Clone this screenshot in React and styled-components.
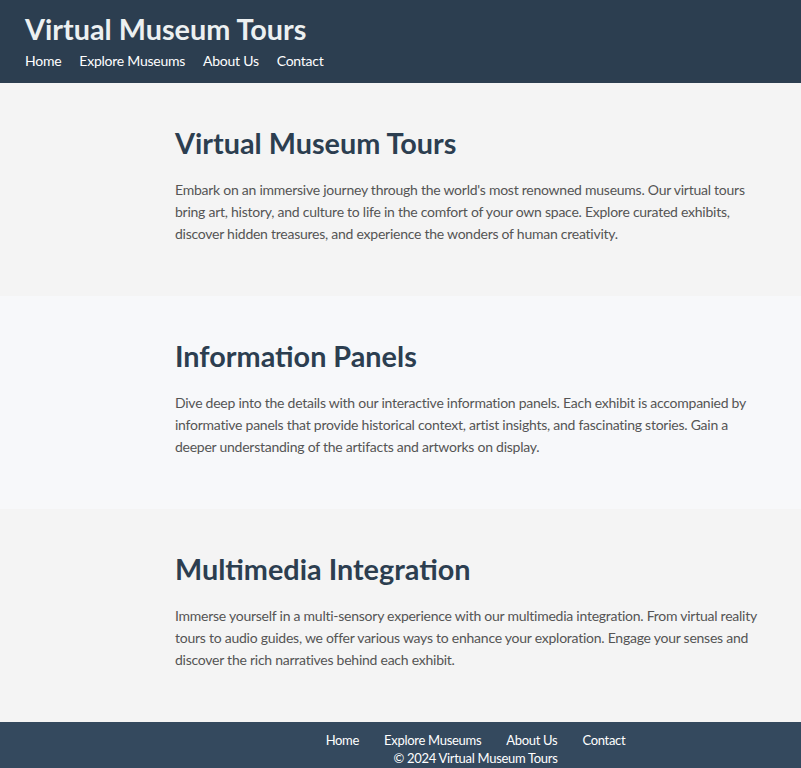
import styled, { createGlobalStyle } from "styled-components";

const GlobalStyle = createGlobalStyle`
  html, body {
    margin: 0;
    padding: 0;
  }
  body {
    font-family: Lato, "Noto Sans", sans-serif;
    background-color: #f4f4f4;
    color: #555;
  }
`;

const Header = styled.header`
  background-color: #2c3e50;
  color: #ecf0f1;
  padding: 12px 25px 12px;
  height: 83px;
  box-sizing: border-box;
`;

const SiteTitle = styled.h1`
  margin: 0;
  font-size: 28.8px;
  line-height: 34px;
  font-weight: 700;
`;

const Nav = styled.nav`
  display: flex;
  gap: 18px;
  margin-top: 6px;
`;

const NavLink = styled.a`
  color: #fff;
  text-decoration: none;
  font-size: 14px;
  line-height: 18px;
  letter-spacing: -0.25px;
`;

const Section = styled.section`
  background-color: ${({ $alt }) => ($alt ? "#f7f8fa" : "#f4f4f4")};
  height: 213px;
  box-sizing: border-box;
  padding: 43px 25px 0 175px;
`;

const Heading = styled.h2`
  margin: 0 0 19px;
  color: #2c3e50;
  font-size: 28.8px;
  line-height: 34px;
  font-weight: 700;
`;

const Text = styled.p`
  margin: 0;
  font-size: 14px;
  line-height: 22px;
  letter-spacing: -0.25px;
  max-width: 585px;
`;

const Footer = styled.footer`
  background-color: #34495e;
  color: #fff;
  padding: 9px 0 10px 150px;
  text-align: center;
`;

const FooterNav = styled.div`
  display: flex;
  justify-content: center;
  gap: 25px;
`;

const FooterLink = styled.a`
  color: #fff;
  text-decoration: none;
  font-size: 13px;
  line-height: 18px;
  letter-spacing: -0.3px;
`;

const Copy = styled.p`
  margin: 0;
  font-size: 13px;
  line-height: 18px;
  letter-spacing: -0.3px;
`;

const links = ["Home", "Explore Museums", "About Us", "Contact"];

const sections = [
  {
    title: "Virtual Museum Tours",
    text: "Embark on an immersive journey through the world's most renowned museums. Our virtual tours bring art, history, and culture to life in the comfort of your own space. Explore curated exhibits, discover hidden treasures, and experience the wonders of human creativity.",
  },
  {
    title: "Information Panels",
    text: "Dive deep into the details with our interactive information panels. Each exhibit is accompanied by informative panels that provide historical context, artist insights, and fascinating stories. Gain a deeper understanding of the artifacts and artworks on display.",
    alt: true,
  },
  {
    title: "Multimedia Integration",
    text: "Immerse yourself in a multi-sensory experience with our multimedia integration. From virtual reality tours to audio guides, we offer various ways to enhance your exploration. Engage your senses and discover the rich narratives behind each exhibit.",
  },
];

export default function App() {
  return (
    <>
      <GlobalStyle />
      <Header>
        <SiteTitle>Virtual Museum Tours</SiteTitle>
        <Nav>
          {links.map((l) => (
            <NavLink key={l} href="#">
              {l}
            </NavLink>
          ))}
        </Nav>
      </Header>
      <main>
        {sections.map((s) => (
          <Section key={s.title} $alt={s.alt}>
            <Heading>{s.title}</Heading>
            <Text>{s.text}</Text>
          </Section>
        ))}
      </main>
      <Footer>
        <FooterNav>
          {links.map((l) => (
            <FooterLink key={l} href="#">
              {l}
            </FooterLink>
          ))}
        </FooterNav>
        <Copy>© 2024 Virtual Museum Tours</Copy>
      </Footer>
    </>
  );
}
